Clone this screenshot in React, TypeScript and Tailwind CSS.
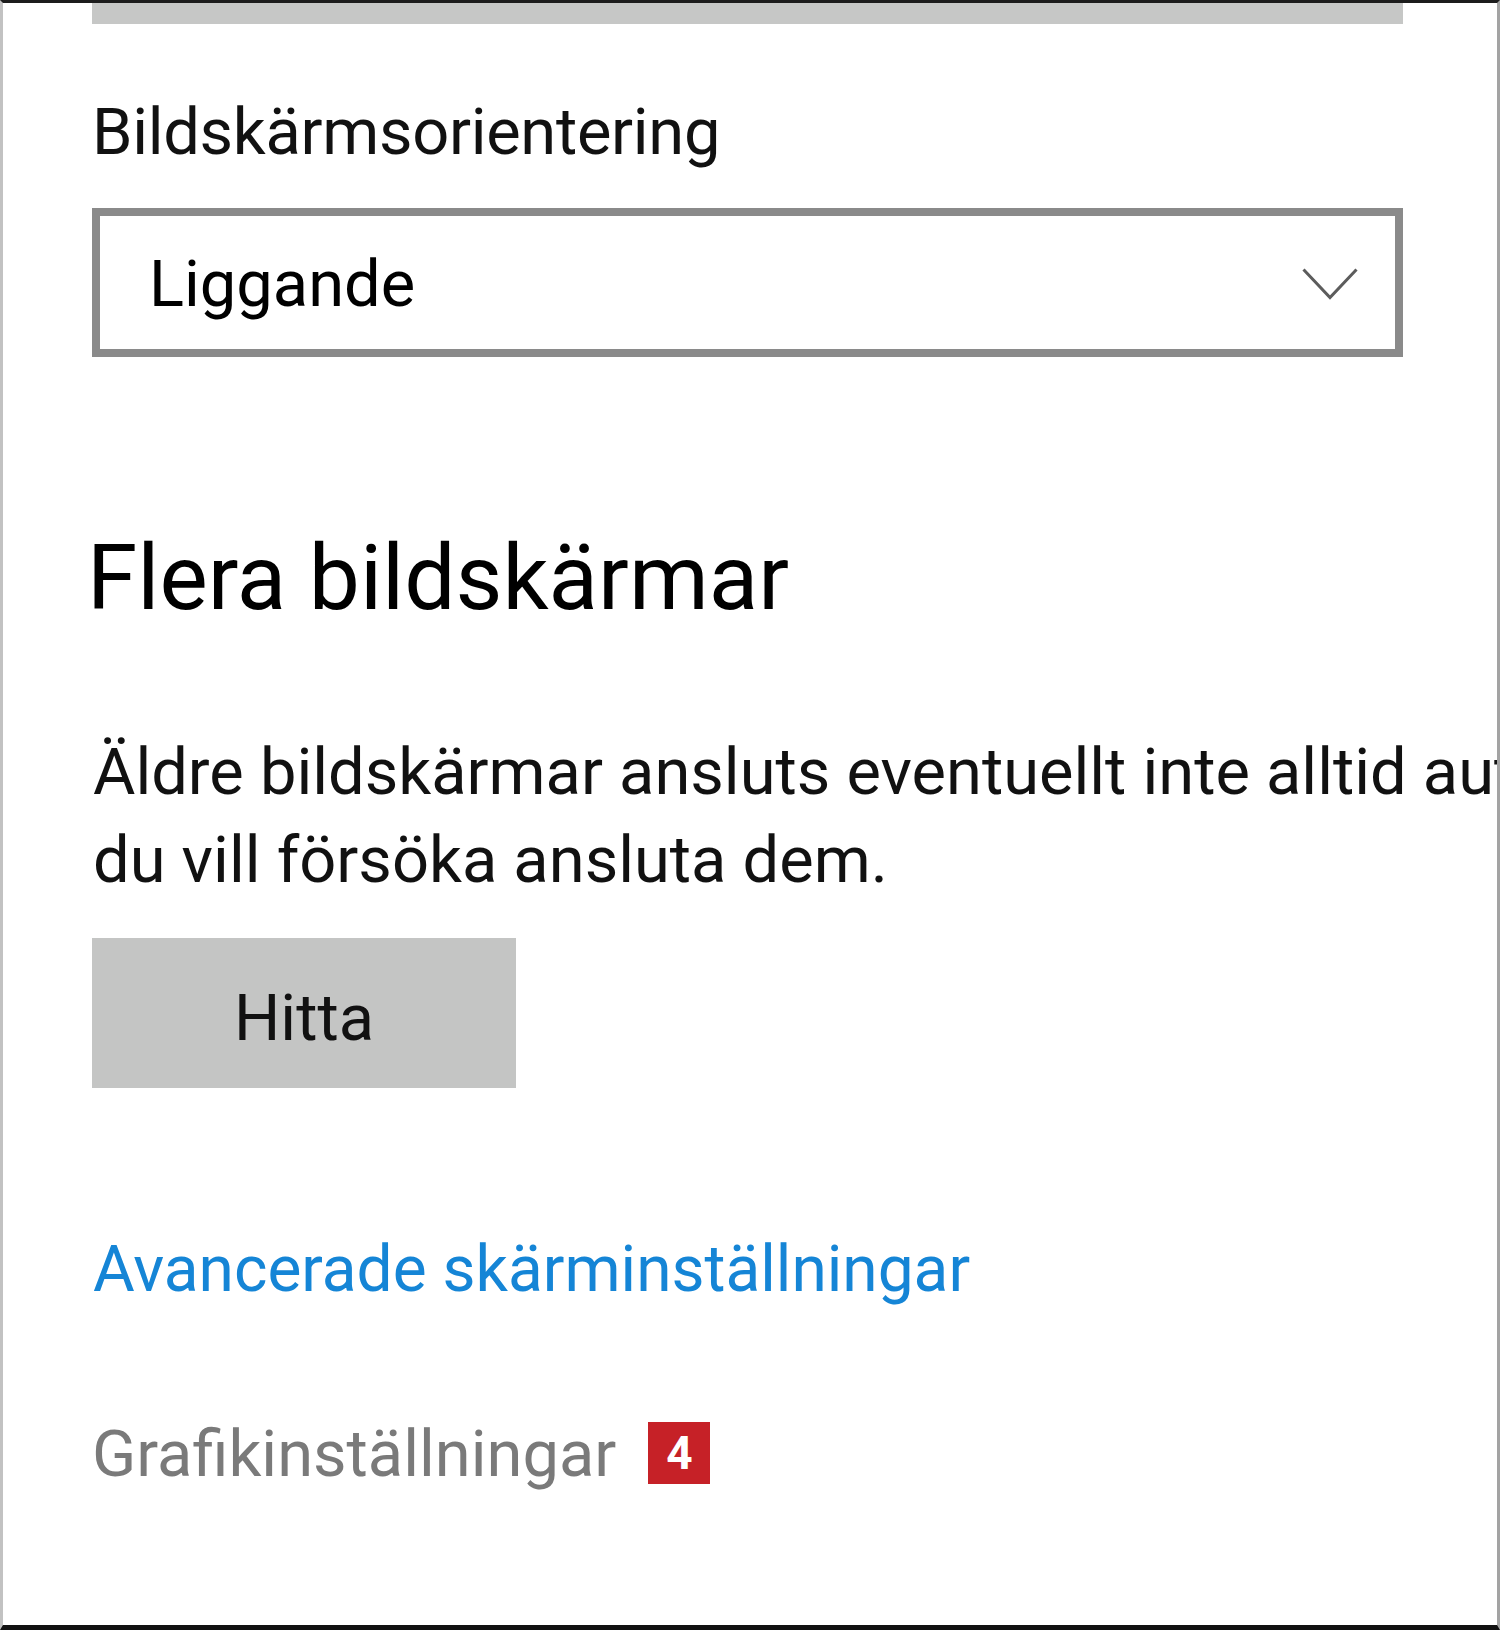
import React from 'react';

export default function App() {
  return (
    <div className="box-border h-[1630px] w-[1500px] overflow-hidden border-t-[3px] border-r-[3px] border-b-[5px] border-l-[3px] border-t-[#1c1c1c] border-r-[#a3a3a3] border-b-[#111111] border-l-[#c2c2c2] bg-white font-['Roboto',sans-serif] text-black">
      {/* Bar left over from the section above */}
      <div className="ml-[89px] h-[21px] w-[1311px] bg-[#c6c7c6]" />

      {/* Orientation */}
      <p className="mt-[76px] ml-[89px] text-[65px] leading-none tracking-[-0.3px] text-[#111]">
        Bildskärmsorientering
      </p>
      <div className="mt-[43px] ml-[89px] flex h-[149px] w-[1311px] items-center justify-between border-[8px] border-[#8a8a8a] bg-white pr-[37px] pl-[49px]">
        <span className="pt-[3px] text-[65px] leading-none">Liggande</span>
        <svg width="56" height="32" viewBox="0 0 56 32" className="mt-[2px]">
          <polyline
            points="1.5,1.5 28,29.5 54.5,1.5"
            fill="none"
            stroke="#5c5c5c"
            strokeWidth="3"
          />
        </svg>
      </div>

      {/* Multiple displays */}
      <h2 className="mt-[176px] ml-[84px] text-[91px] leading-none font-normal">
        Flera bildskärmar
      </h2>
      <p className="mt-[104px] ml-[90px] text-[65px] leading-[88px] whitespace-nowrap text-[#111]">
        Äldre bildskärmar ansluts eventuellt inte alltid automatiskt. Välj Hitta om
        <br />
        du vill försöka ansluta dem.
      </p>
      <button className="mt-[34px] ml-[89px] flex h-[150px] w-[424px] items-center justify-center bg-[#c4c5c4] pt-[11px] text-[65px] leading-none text-[#111]">
        Hitta
      </button>

      {/* Links */}
      <a className="mt-[150px] ml-[90px] block text-[64px] leading-none text-[#1585d6]">
        Avancerade skärminställningar
      </a>
      <div className="mt-[120px] ml-[89px] flex items-start gap-[32px]">
        <span className="text-[65px] leading-none text-[#7a7a7a]">Grafikinställningar</span>
        <span className="flex h-[62px] w-[62px] items-center justify-center bg-[#c62127] text-[46px] leading-none font-bold text-white">
          4
        </span>
      </div>
    </div>
  );
}
